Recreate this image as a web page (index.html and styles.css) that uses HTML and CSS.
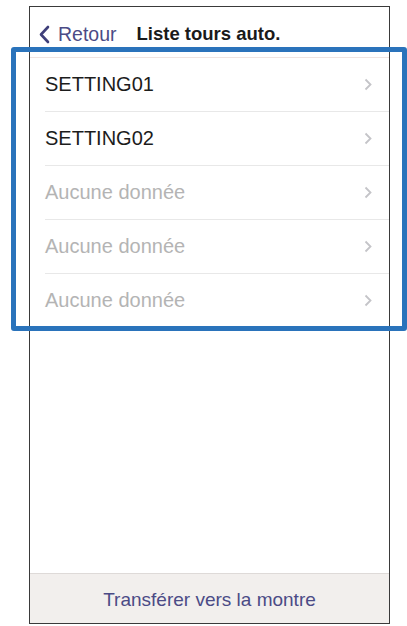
FILE: index.html
```html
<!DOCTYPE html>
<html lang="fr">
<head>
<meta charset="utf-8">
<link rel="stylesheet" href="styles.css">
</head>
<body>
<div class="phone">
  <div class="navbar">
    <div class="back">
      <svg class="back-icon" width="12" height="19" viewBox="0 0 12 19"><path d="M10 2 L3 9.5 L10 17" fill="none" stroke="#3f3f7a" stroke-width="2.6" stroke-linecap="round" stroke-linejoin="round"/></svg>
      <span>Retour</span>
    </div>
    <div class="title">Liste tours auto.</div>
  </div>
  <ul class="list">
    <li class="row"><span>SETTING01</span><svg class="chev" width="9" height="13" viewBox="0 0 9 13"><path d="M1.5 1.5 L6.5 6.5 L1.5 11.5" fill="none" stroke="#c4c4c8" stroke-width="1.8"/></svg></li>
    <li class="row"><span>SETTING02</span><svg class="chev" width="9" height="13" viewBox="0 0 9 13"><path d="M1.5 1.5 L6.5 6.5 L1.5 11.5" fill="none" stroke="#c4c4c8" stroke-width="1.8"/></svg></li>
    <li class="row empty"><span>Aucune donnée</span><svg class="chev" width="9" height="13" viewBox="0 0 9 13"><path d="M1.5 1.5 L6.5 6.5 L1.5 11.5" fill="none" stroke="#c4c4c8" stroke-width="1.8"/></svg></li>
    <li class="row empty"><span>Aucune donnée</span><svg class="chev" width="9" height="13" viewBox="0 0 9 13"><path d="M1.5 1.5 L6.5 6.5 L1.5 11.5" fill="none" stroke="#c4c4c8" stroke-width="1.8"/></svg></li>
    <li class="row empty"><span>Aucune donnée</span><svg class="chev" width="9" height="13" viewBox="0 0 9 13"><path d="M1.5 1.5 L6.5 6.5 L1.5 11.5" fill="none" stroke="#c4c4c8" stroke-width="1.8"/></svg></li>
  </ul>
  <div class="spacer"></div>
  <div class="footer">Transférer vers la montre</div>
</div>
<div class="highlight"></div>
</body>
</html>
```
FILE: styles.css
```css
html, body {
  margin: 0;
  padding: 0;
  background: #ffffff;
}
body {
  position: relative;
  width: 407px;
  height: 626px;
  overflow: hidden;
  font-family: "Liberation Sans", Arial, sans-serif;
}
.phone {
  margin: 6px 0 0 29px;
  width: 359px;
  height: 616px;
  border: 1.5px solid #3a3a3a;
  display: flex;
  flex-direction: column;
  background: #ffffff;
}
.navbar {
  height: 50px;
  box-sizing: border-box;
  padding: 4px 0 0 8px;
  display: flex;
  align-items: center;
  gap: 20px;
  flex-shrink: 0;
}
.back {
  display: flex;
  align-items: center;
  gap: 8px;
  color: #4b4b86;
  font-size: 19.5px;
}
.back-icon {
  display: block;
}
.title {
  font-weight: bold;
  font-size: 18.5px;
  color: #1a1a1a;
}
.list {
  list-style: none;
  margin: 0;
  padding: 0;
  border-top: 1px solid #efe4e1;
}
.row {
  height: 53px;
  margin-left: 15px;
  padding-right: 16px;
  border-bottom: 1px solid #e8e8e8;
  display: flex;
  align-items: center;
  justify-content: space-between;
  font-size: 20px;
  color: #1c1c1c;
}
.row.empty {
  color: #b4b4b4;
}
.row.empty:last-child {
  border-bottom: none;
}
.chev {
  display: block;
}
.spacer {
  flex: 1;
}
.footer {
  height: 50px;
  box-sizing: border-box;
  padding-top: 3px;
  flex-shrink: 0;
  border-top: 1px solid #dedad8;
  background: #f2efed;
  display: flex;
  align-items: center;
  justify-content: center;
  font-size: 19px;
  color: #4b4b86;
}
.highlight {
  position: absolute;
  left: 11px;
  top: 47px;
  width: 386px;
  height: 274px;
  border: 5px solid #2a73bb;
  border-radius: 3px;
}
```
